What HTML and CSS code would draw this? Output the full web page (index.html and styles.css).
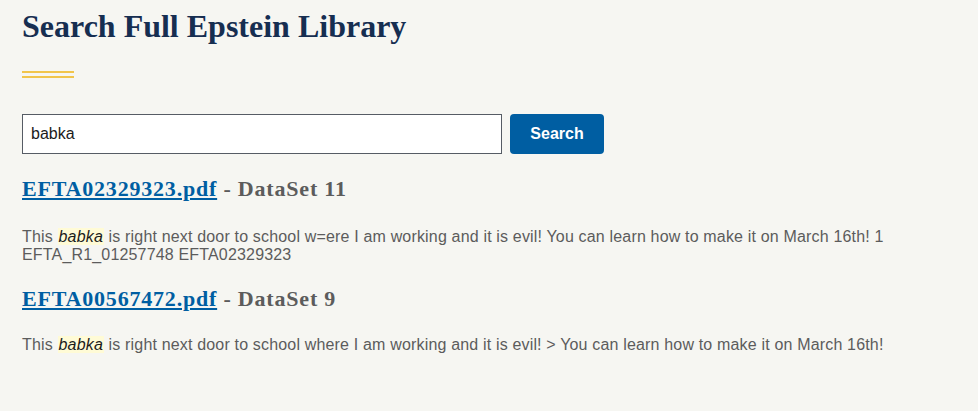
FILE: index.html
```html
<!DOCTYPE html>
<html lang="en">
<head>
<meta charset="utf-8">
<title>Search Full Epstein Library</title>
<link rel="stylesheet" href="styles.css">
</head>
<body>
<main class="page">
  <h1 class="title">Search Full Epstein Library</h1>
  <div class="divider"></div>
  <form class="search">
    <input class="search-input" type="text" value="babka">
    <button class="search-btn" type="button">Search</button>
  </form>
  <section class="results">
    <article class="result">
      <h2 class="result-title"><a href="#" class="result-link">EFTA02329323.pdf</a> - DataSet 11</h2>
      <p class="snippet">This <em class="hit">babka</em> is right next door to school w=ere I am working and it is evil! You can learn how to make it on March 16th! 1 EFTA_R1_01257748 EFTA02329323</p>
    </article>
    <article class="result">
      <h2 class="result-title"><a href="#" class="result-link">EFTA00567472.pdf</a> - DataSet 9</h2>
      <p class="snippet">This <em class="hit">babka</em> is right next door to school where I am working and it is evil! &gt; You can learn how to make it on March 16th!</p>
    </article>
  </section>
</main>
</body>
</html>
```
FILE: styles.css
```css
html, body {
  margin: 0;
  padding: 0;
  background: #f6f6f2;
}
.page {
  padding: 0 22px;
  font-family: "Liberation Sans", Arial, sans-serif;
}
.title {
  margin: 6px 0 0;
  font-family: "Liberation Serif", "Times New Roman", serif;
  font-weight: 700;
  font-size: 32px;
  line-height: 40px;
  color: #162e51;
}
.divider {
  width: 52px;
  height: 3px;
  margin-top: 25px;
  border-top: 2px solid #f1c54c;
  border-bottom: 2px solid #f1c54c;
}
.search {
  display: flex;
  gap: 8px;
  margin: 36px 0 0;
}
.search-input {
  box-sizing: border-box;
  width: 480px;
  height: 40px;
  margin: 0;
  padding: 0 8px;
  border: 1px solid #565c65;
  border-radius: 0;
  background: #fff;
  font-family: "Liberation Sans", Arial, sans-serif;
  font-size: 16px;
  color: #1b1b1b;
}
.search-btn {
  box-sizing: border-box;
  width: 94px;
  height: 40px;
  margin: 0;
  border: 0;
  border-radius: 4px;
  background: #005ea2;
  color: #fff;
  font-family: "Liberation Sans", Arial, sans-serif;
  font-weight: 700;
  font-size: 16px;
}
.results {
  margin-top: 22px;
}
.result + .result {
  margin-top: 22px;
}
.result-title {
  margin: 0;
  font-family: "Liberation Serif", "Times New Roman", serif;
  font-weight: 700;
  font-size: 22px;
  line-height: 26px;
  letter-spacing: 0.8px;
  color: #5c5c5c;
}
.result-link {
  color: #005ea2;
  text-decoration: underline;
  text-underline-offset: 2px;
}
.snippet {
  margin: 26px 0 0;
  font-size: 16px;
  line-height: 18px;
  letter-spacing: 0.17px;
  color: #5c5c5c;
}
.result + .result .snippet {
  margin-top: 24px;
}
.hit {
  font-style: italic;
  padding: 0 1px;
  color: #1b1b1b;
  background: #fffbd6;
}
```
